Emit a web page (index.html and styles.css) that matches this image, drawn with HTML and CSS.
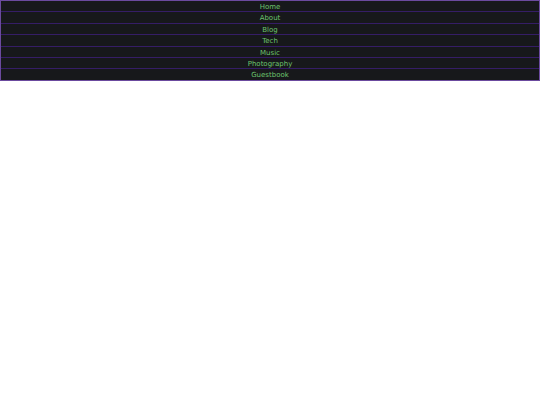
FILE: index.html
```html
<!DOCTYPE html>
<html lang="en">
<head>
    <meta charset="UTF-8">
    <meta name="viewport" content="width=device-width, initial-scale=1.0">
    <title>Home</title>
    <link rel="stylesheet" href="styles.css">
</head>

<body>

<!-- Site navigation -->
<nav class="nav">
    <ul>
        <li><a href="#">Home</a></li>
        <li><a href="#">About</a></li>
        <li><a href="#">Blog</a></li>
        <li><a href="#">Tech</a></li>
        <li><a href="#">Music</a></li>
        <li><a href="#">Photography</a></li>
        <li><a href="#">Guestbook</a></li>
    </ul>
</nav>

</body>
</html>
```

FILE: styles.css
```css
body {
    margin: 0;
    padding: 0;
    background-color: #fff;
    font-family: "DejaVu Sans", Verdana, sans-serif;
}
.nav {
    background: #17181b;
    border: 1px solid #6b4a9e;
}
.nav ul {
    list-style: none;
    margin: 0;
    padding: 0;
}
.nav li {
    text-align: center;
    border-bottom: 1px solid #351d66;
    height: 10.4px;
    line-height: 12px;
    font-size: 7px;
}
.nav li:last-child {
    border-bottom: none;
}
.nav a {
    color: #6cc46c;
    text-decoration: none;
}
```
